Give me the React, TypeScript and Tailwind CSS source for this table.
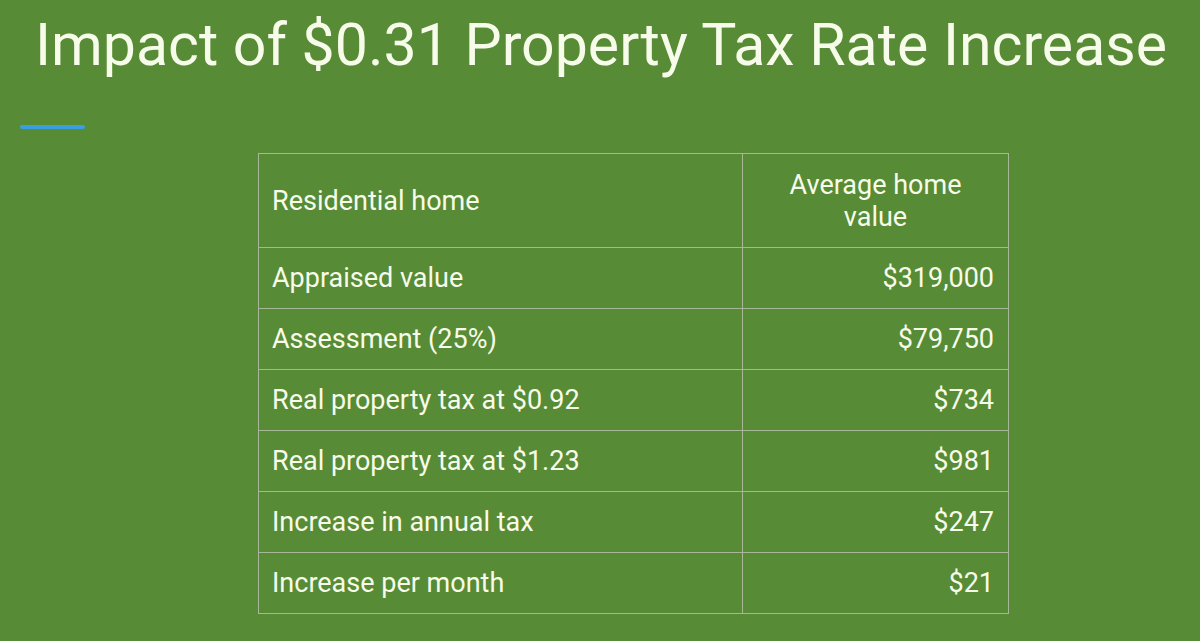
const rows: [string, string][] = [
  ["Appraised value", "$319,000"],
  ["Assessment (25%)", "$79,750"],
  ["Real property tax at $0.92", "$734"],
  ["Real property tax at $1.23", "$981"],
  ["Increase in annual tax", "$247"],
  ["Increase per month", "$21"],
];

export default function App() {
  return (
    <div
      className="w-[1200px] h-[641px] bg-[#578b35] text-[#f7fbea] overflow-hidden"
      style={{ fontFamily: "Roboto, 'Noto Sans', sans-serif" }}
    >
      <h1 className="pl-[35px] pt-[10px] text-[59px] leading-[69px] font-normal whitespace-nowrap">
        Impact of $0.31 Property Tax Rate Increase
      </h1>
      <div className="ml-[20px] mt-[46px] w-[65px] h-[4px] rounded-full bg-[#3a9fe0]" />
      <div className="flex justify-start pl-[258px] mt-[24px]">
        <table className="w-[751px] border-collapse text-[27px] leading-[32px]">
          <tbody>
            <tr className="h-[94px]">
              <td className="w-[484px] border border-[#a7b797] pl-[13px] pr-[14px]">Residential home</td>
              <td className="border border-[#a7b797] px-[14px] text-center">
                Average home
                <br />
                value
              </td>
            </tr>
            {rows.map(([label, value]) => (
              <tr key={label} className="h-[61px]">
                <td className="border border-[#a7b797] pl-[13px] pr-[14px]">{label}</td>
                <td className="border border-[#a7b797] px-[14px] text-right">{value}</td>
              </tr>
            ))}
          </tbody>
        </table>
      </div>
    </div>
  );
}
